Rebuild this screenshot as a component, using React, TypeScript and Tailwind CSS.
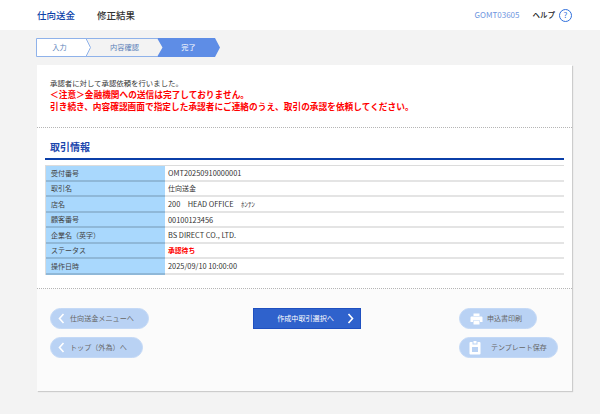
const rows: [string, React.ReactNode][] = [
  ["受付番号", "OMT20250910000001"],
  ["取引名", <span className="text-[7px]">仕向送金</span>],
  ["店名", <span className="whitespace-pre">200{"　"}HEAD OFFICE{"　"}<span className="text-[7px]">ﾎﾝﾃﾝ</span></span>],
  ["顧客番号", "00100123456"],
  ["企業名（英字）", "BS DIRECT CO., LTD."],
  ["ステータス", <span className="text-[6.8px] font-bold text-[#ff0000]">承認待ち</span>],
  ["操作日時", "2025/09/10 10:00:00"],
];

function ChevronLeft() {
  return (
    <svg width="7" height="11" viewBox="0 0 7 11" className="shrink-0">
      <path d="M5.5 1 L1.5 5.5 L5.5 10" fill="none" stroke="#ffffff" strokeWidth="1.6" />
    </svg>
  );
}

function BackButton({ label, w }: { label: string; w: string }) {
  return (
    <div className={`flex h-[21px] items-center rounded-full border border-[#c4d9f6] bg-[#b9d2f4] pl-[7px] text-[7.1px] text-[#666666] ${w}`}>
      <ChevronLeft />
      <span className="ml-[5px] whitespace-nowrap">{label}</span>
    </div>
  );
}

export default function App() {
  return (
    <div
      className="flex h-[414px] w-[600px] flex-col overflow-hidden bg-[#f3f3f3] text-[#333333]"
      style={{ fontFamily: '"Noto Sans CJK JP", "Liberation Sans", sans-serif' }}
    >
      <header className="flex h-[30px] shrink-0 items-center bg-white pl-[37px] pr-[28px]">
        <span className="text-[9.5px] font-medium text-[#0b3fa8]">仕向送金</span>
        <span className="ml-[22px] text-[9.5px] font-medium text-[#333333]">修正結果</span>
        <span className="ml-auto text-[8px] text-[#6f96e0]">GOMT03605</span>
        <span className="ml-[13px] text-[7.5px] font-medium text-[#222222]">ヘルプ</span>
        <span className="ml-[4px] flex h-[13px] w-[13px] items-center justify-center rounded-full border-[1.5px] border-[#2f6fdc] text-[8px] leading-none text-[#2f6fdc]">?</span>
      </header>

      <div className="ml-[36px] mt-[8px] flex h-[19px]">
        <div className="relative flex h-[19px] w-[55px] items-center justify-center pr-[8px] text-[7.2px] text-[#5b7fb8]">
          <svg className="absolute inset-0 h-full w-full" viewBox="0 0 55 19">
            <path d="M0.5 0.5 H50 L54.5 9.5 L50 18.5 H0.5 Z" fill="#ffffff" stroke="#8fb2ea" />
          </svg>
          <span className="relative">入力</span>
        </div>
        <div className="ml-[-5px] flex h-[19px] w-[71px] items-center justify-center border-y border-[#8fb2ea] pl-[6px] text-[7.2px] text-[#5b7fb8]">
          <span className="relative z-10">内容確認</span>
        </div>
        <div className="relative flex h-[19px] w-[63px] items-center justify-center text-[7.2px] text-white">
          <svg className="absolute inset-0 h-full w-full" viewBox="0 0 63 19">
            <path d="M0 0 H58 L63 9.5 L58 19 H0 L5.5 9.5 Z" fill="#5e8de6" />
          </svg>
          <span className="relative">完了</span>
        </div>
      </div>

      <main className="ml-[37px] mt-[8px] flex h-[326px] w-[535px] flex-col bg-white shadow-[1px_1px_1px_#cccccc]">
        <section className="h-[63px] border-b border-dotted border-[#b5b5b5] pl-[13px] pt-[12px] leading-[12px]">
          <p className="text-[7.4px]">承認者に対して承認依頼を行いました。</p>
          <p className="text-[8.7px] font-bold text-[#ff0000]">＜注意＞金融機関への送信は完了しておりません。</p>
          <p className="text-[8.7px] font-bold text-[#ff0000]">引き続き、内容確認画面で指定した承認者にご連絡のうえ、取引の承認を依頼してください。</p>
        </section>

        <section className="h-[161px] border-b border-dotted border-[#b5b5b5] pl-[8px] pr-[8px]">
          <h2 className="mt-[11px] h-[19px] pl-[5px] text-[10px] font-bold leading-[16px] text-[#1b46ad]">取引情報</h2>
          <div className="h-[2px] bg-[#0b3fa8]" />
          <div className="mt-[5px] border-l border-t border-[#dcdcdc]">
            {rows.map(([k, v]) => (
              <div key={k} className="flex h-[15.5px] text-[7.4px]">
                <div className="flex w-[119px] shrink-0 items-center border-b-2 border-[#8fb8d8] bg-[#a9d8fd] pl-[5px] text-[7px] text-[#444444]">{k}</div>
                <div className="flex flex-1 items-center border-b-2 border-[#e4e4e4] pl-[3px]">{v}</div>
              </div>
            ))}
          </div>
        </section>

        <section className="grid flex-1 grid-cols-[auto_1fr_auto] bg-[#fbfbfb] pl-[13px] pr-[14px] pt-[19px]">
          <div className="flex flex-col items-start gap-[8px]">
            <BackButton label="仕向送金メニューへ" w="w-[99px]" />
            <BackButton label="トップ（外為）へ" w="w-[93px]" />
          </div>
          <div className="flex justify-center">
            <div className="relative ml-[6px] flex h-[21px] w-[108px] items-center justify-center border border-[#1f50c0] bg-[#2f62cc] text-[7.1px] text-white">
              <span className="mr-[3px]">作成中取引選択へ</span>
              <svg width="7" height="11" viewBox="0 0 7 11" className="absolute right-[6px]">
                <path d="M1.5 1 L5.5 5.5 L1.5 10" fill="none" stroke="#ffffff" strokeWidth="1.6" />
              </svg>
            </div>
          </div>
          <div className="flex flex-col items-start gap-[8px]">
            <div className="flex h-[21px] w-[78px] items-center rounded-full border border-[#c4d9f6] bg-[#b9d2f4] pl-[10px] text-[7px] text-[#666666]">
              <svg width="13" height="12" viewBox="0 0 13 12" className="shrink-0">
                <path d="M3.5 0.5 H9.5 V3 H3.5 Z M1.5 3.5 H11.5 A1 1 0 0 1 12.5 4.5 V9 H10 V7.5 H3 V9 H0.5 V4.5 A1 1 0 0 1 1.5 3.5 Z M3.5 8 H9.5 V11.5 H3.5 Z" fill="#ffffff" />
              </svg>
              <span className="ml-[4px] whitespace-nowrap">申込書印刷</span>
            </div>
            <div className="flex h-[21px] w-[99px] items-center rounded-full border border-[#c4d9f6] bg-[#b9d2f4] pl-[9px] text-[7px] text-[#666666]">
              <svg width="12" height="14" viewBox="0 0 12 14" className="shrink-0">
                <path d="M1.5 1 H3.5 V3.5 H8.5 V1 H10.5 A1 1 0 0 1 11.5 2 V12.5 A1 1 0 0 1 10.5 13.5 H1.5 A1 1 0 0 1 0.5 12.5 V2 A1 1 0 0 1 1.5 1 Z M3 6 V11 H9 V6 Z" fill="#ffffff" fillRule="evenodd" />
                <rect x="4.5" y="0" width="3" height="2.5" fill="#ffffff" />
              </svg>
              <span className="ml-[10px] whitespace-nowrap">テンプレート保存</span>
            </div>
          </div>
        </section>
      </main>
    </div>
  );
}
